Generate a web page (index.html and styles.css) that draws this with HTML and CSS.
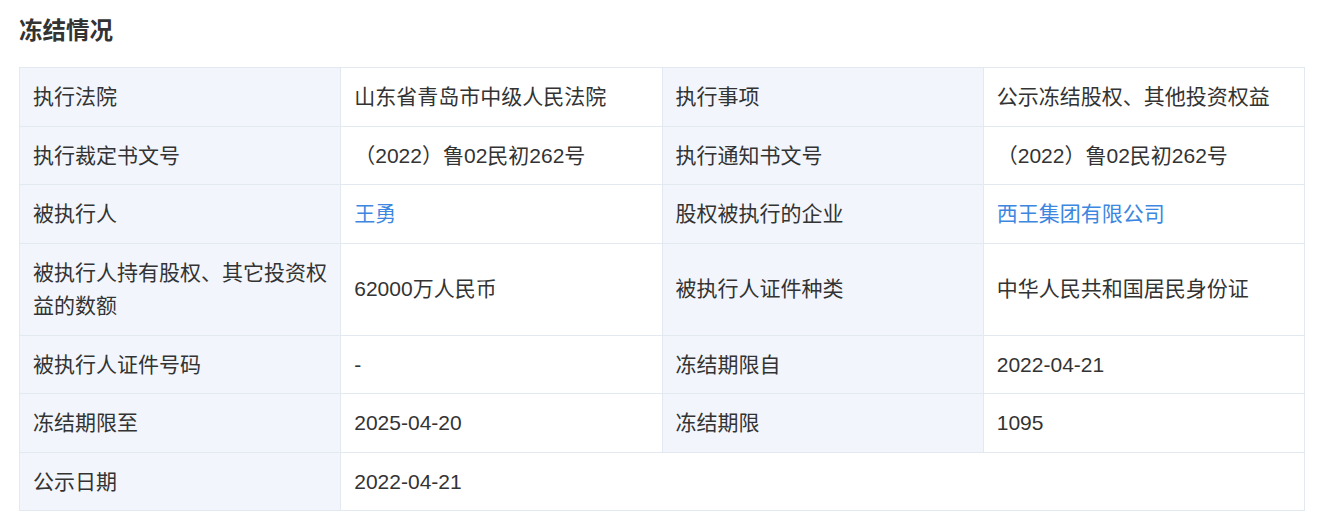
FILE: index.html
```html
<!DOCTYPE html>
<html lang="zh-CN">
<head>
<meta charset="utf-8">
<title>冻结情况</title>
<link rel="stylesheet" href="styles.css">
</head>
<body>
<section class="section">
  <h2 class="title">冻结情况</h2>
  <table class="info">
    <tbody>
      <tr>
        <th>执行法院</th><td>山东省青岛市中级人民法院</td>
        <th>执行事项</th><td>公示冻结股权、其他投资权益</td>
      </tr>
      <tr>
        <th>执行裁定书文号</th><td>（2022）鲁02民初262号</td>
        <th>执行通知书文号</th><td>（2022）鲁02民初262号</td>
      </tr>
      <tr>
        <th>被执行人</th><td><a class="link" href="#">王勇</a></td>
        <th>股权被执行的企业</th><td><a class="link" href="#">西王集团有限公司</a></td>
      </tr>
      <tr>
        <th>被执行人持有股权、其它投资权益的数额</th><td>62000万人民币</td>
        <th>被执行人证件种类</th><td>中华人民共和国居民身份证</td>
      </tr>
      <tr>
        <th>被执行人证件号码</th><td>-</td>
        <th>冻结期限自</th><td>2022-04-21</td>
      </tr>
      <tr>
        <th>冻结期限至</th><td>2025-04-20</td>
        <th>冻结期限</th><td>1095</td>
      </tr>
      <tr>
        <th>公示日期</th><td colspan="3">2022-04-21</td>
      </tr>
    </tbody>
  </table>
</section>
</body>
</html>
```

FILE: styles.css
```css
html, body {
  margin: 0;
  padding: 0;
  background: #ffffff;
}
body {
  font-family: "Liberation Sans", "Noto Sans CJK SC", sans-serif;
  color: #333333;
}
.section {
  padding: 16px 13px 0 19px;
}
.title {
  margin: 0 0 21px 0;
  font-size: 23.5px;
  line-height: 30px;
  font-weight: bold;
  color: #333333;
}
.info {
  width: 1286px;
  table-layout: fixed;
  border-collapse: collapse;
  border: 1px solid #e3e9f1;
}
.info th,
.info td {
  width: 25%;
  border: 1px solid #e3e9f1;
  padding: 12px 13px 12px 13px;
  font-size: 21px;
  line-height: 33.5px;
  text-align: left;
  vertical-align: middle;
  font-weight: normal;
  color: #333333;
  box-sizing: border-box;
}
.info th {
  background: #f2f6fc;
}
.info td {
  background: #ffffff;
}
.link {
  color: #3d87e0;
  text-decoration: none;
}
```
